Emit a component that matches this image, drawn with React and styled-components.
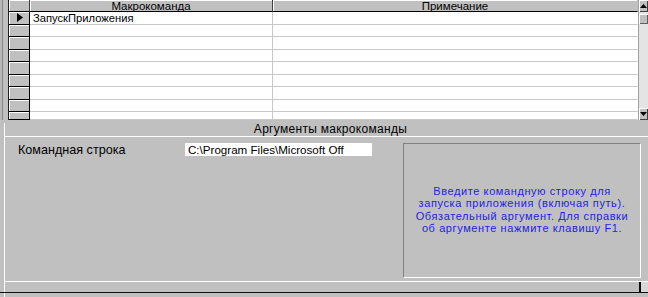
import React from "react";
import styled, { createGlobalStyle } from "styled-components";

const GlobalStyle = createGlobalStyle`
  html, body {
    margin: 0;
    padding: 0;
    background: #c0c0c0;
  }
`;

// Main window frame
const Window = styled.div`
  width: 648px;
  height: 297px;
  overflow: hidden;
  background: #c0c0c0;
  font-family: "Liberation Sans", Arial, sans-serif;
  font-size: 12px;
  color: #000;
  display: flex;
  flex-direction: column;
`;

const TopArea = styled.div`
  display: flex;
  height: 120px;
`;

const LeftStrip = styled.div`
  width: 8px;
  background: linear-gradient(to right, #b8b8b8 0 2px, #8a8a8a 2px 3px, #c0c0c0 3px);
  border-right: 1px solid #202020;
`;

const Grid = styled.div`
  flex: 1;
  display: grid;
  grid-template-columns: 21px 243px 1fr 10px;
  grid-template-rows: 12px repeat(8, 12.5px) 8px;
  background: #fff;
`;

const HeaderCell = styled.div`
  background: #c0c0c0;
  border-bottom: 1px solid #000;
  border-right: 1px solid ${(p) => (p.$last ? "#c0c0c0" : "#404040")};
  box-shadow: inset 1px 1px 0 #fff;
  text-align: center;
  line-height: 12px;
  font-size: 11.5px;
  white-space: nowrap;
`;

const Selector = styled.div`
  background: #c0c0c0;
  border-right: 1px solid #000;
  border-bottom: 1px solid #000;
  box-shadow: inset 1px 1px 0 #fff;
  display: flex;
  align-items: center;
  justify-content: center;
  padding-left: 1px;
`;

const Cell = styled.div`
  background: #fff;
  border-bottom: 1px solid #c8c8c8;
  border-right: 1px solid ${(p) => (p.$divider ? "#c8c8c8" : "transparent")};
  padding-left: 3px;
  font-size: 11.2px;
  line-height: 12px;
  white-space: nowrap;
  overflow: hidden;
`;

const ScrollBar = styled.div`
  grid-column: 4;
  grid-row: 1 / -1;
  display: flex;
  flex-direction: column;
  background: #e4e4e4;
  border-left: 1px solid #a0a0a0;
`;

const ScrollButton = styled.div`
  height: 12px;
  background: #c0c0c0;
  box-shadow: inset 1px 1px 0 #fff, inset -1px -1px 0 #404040;
  display: flex;
  align-items: center;
  justify-content: center;
`;

const Thumb = styled.div`
  height: 10px;
  margin-top: 2px;
  background: #c0c0c0;
  box-shadow: inset 1px 1px 0 #fff, inset -1px -1px 0 #606060;
`;

const Track = styled.div`
  flex: 1;
`;

const Arrow = ({ dir }) => (
  <svg width="7" height="4" viewBox="0 0 7 4">
    <path d={dir === "up" ? "M3.5 0 L7 4 L0 4 Z" : "M0 0 L7 0 L3.5 4 Z"} fill="#000" />
  </svg>
);

const Lower = styled.div`
  flex: 1;
  display: flex;
  flex-direction: column;
  margin-left: 4px;
  margin-top: 3px;
  border-left: 1px solid #fff;
`;

const ArgsHeader = styled.div`
  height: 13px;
  line-height: 13px;
  text-align: center;
  padding-left: 8px;
  letter-spacing: 0.3px;
  border-bottom: 1px solid #fff;
  white-space: nowrap;
`;

const ArgsPanel = styled.div`
  height: 145px;
  display: flex;
  border-bottom: 1px solid #fff;
  padding: 6px 6px 0 13px;
  box-sizing: border-box;
`;

const ArgRow = styled.div`
  display: flex;
  align-items: center;
  height: 13px;
`;

const ArgLabel = styled.div`
  width: 167px;
  font-size: 12.6px;
  white-space: nowrap;
`;

const ArgInput = styled.div`
  width: 184px;
  height: 13px;
  background: #fff;
  padding-left: 3px;
  font-size: 11.6px;
  line-height: 13px;
  white-space: nowrap;
  overflow: hidden;
`;

const ArgsFields = styled.div`
  width: 385px;
`;

const HelpBox = styled.div`
  width: 238px;
  height: 135px;
  box-sizing: border-box;
  border-top: 1px solid #808080;
  border-left: 1px solid #808080;
  border-right: 1px solid #fff;
  border-bottom: 1px solid #fff;
  display: flex;
  flex-direction: column;
  align-items: center;
  justify-content: center;
  color: #1e1ee6;
  padding-bottom: 2px;
`;

const HelpLine = styled.div`
  line-height: 12.5px;
  font-size: 11px;
  letter-spacing: 0.6px;
  white-space: nowrap;
`;

const StatusBar = styled.div`
  height: 10px;
  display: flex;
  justify-content: flex-end;
  border-bottom: 1px solid #101010;
  margin-left: -5px;
`;

const StatusEdge = styled.div`
  width: 7px;
  border-left: 2px solid #101010;
  background: #d8d8d8;
`;

const rows = Array.from({ length: 9 }, (_, i) => i);

const helpLines = [
  "Введите командную строку для",
  "запуска приложения (включая путь).",
  "Обязательный аргумент. Для справки",
  "об аргументе нажмите клавишу F1.",
];

export default function App() {
  return (
    <Window>
      <GlobalStyle />
      <TopArea>
        <LeftStrip />
        <Grid>
          <HeaderCell />
          <HeaderCell>Макрокоманда</HeaderCell>
          <HeaderCell $last>Примечание</HeaderCell>
          <ScrollBar>
            <ScrollButton>
              <Arrow dir="up" />
            </ScrollButton>
            <Thumb />
            <Track />
            <ScrollButton>
              <Arrow dir="down" />
            </ScrollButton>
          </ScrollBar>
          {rows.map((i) => (
            <React.Fragment key={i}>
              <Selector>
                {i === 0 && (
                  <svg width="6" height="9" viewBox="0 0 6 9">
                    <path d="M0 0 L6 4.5 L0 9 Z" fill="#000" />
                  </svg>
                )}
              </Selector>
              <Cell $divider>{i === 0 ? "ЗапускПриложения" : ""}</Cell>
              <Cell />
            </React.Fragment>
          ))}
        </Grid>
      </TopArea>
      <Lower>
        <ArgsHeader>Аргументы макрокоманды</ArgsHeader>
        <ArgsPanel>
          <ArgsFields>
            <ArgRow>
              <ArgLabel>Командная строка</ArgLabel>
              <ArgInput>C:\Program Files\Microsoft Off</ArgInput>
            </ArgRow>
          </ArgsFields>
          <HelpBox>
            {helpLines.map((line) => (
              <HelpLine key={line}>{line}</HelpLine>
            ))}
          </HelpBox>
        </ArgsPanel>
        <StatusBar>
          <StatusEdge />
        </StatusBar>
      </Lower>
    </Window>
  );
}
